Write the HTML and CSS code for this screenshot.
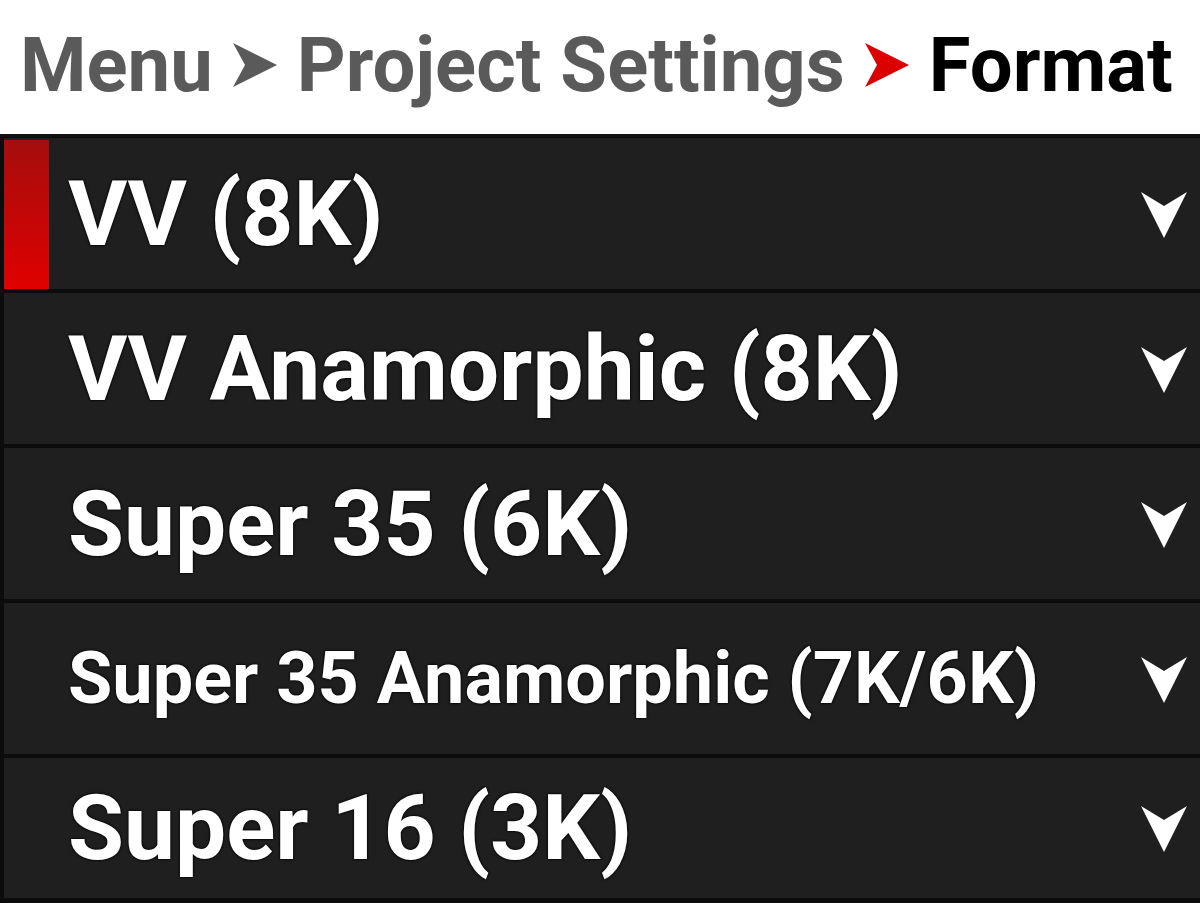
FILE: index.html
```html
<!DOCTYPE html>
<html>
<head>
<meta charset="utf-8">
<link rel="stylesheet" href="styles.css">
</head>
<body>
<div class="crumbs">
  <span class="crumb">Menu</span>
  <svg class="sep" viewBox="0 0 48 48"><path d="M2 2 L46 24 L2 46 L14 24 Z" fill="#5a5a5a"/></svg>
  <span class="crumb">Project Settings</span>
  <svg class="sep" viewBox="0 0 48 48"><path d="M2 2 L46 24 L2 46 L14 24 Z" fill="#dd0000"/></svg>
  <span class="crumb current">Format</span>
</div>
<div class="list">
  <div class="row active"><span class="mark"></span><span class="label">VV (8K)</span><svg class="chev" viewBox="0 0 48 48"><path d="M1 2 L24 16 L47 2 L24 48 Z" fill="#fff"/></svg></div>
  <div class="row"><span class="mark"></span><span class="label">VV Anamorphic (8K)</span><svg class="chev" viewBox="0 0 48 48"><path d="M1 2 L24 16 L47 2 L24 48 Z" fill="#fff"/></svg></div>
  <div class="row"><span class="mark"></span><span class="label">Super 35 (6K)</span><svg class="chev" viewBox="0 0 48 48"><path d="M1 2 L24 16 L47 2 L24 48 Z" fill="#fff"/></svg></div>
  <div class="row"><span class="mark"></span><span class="label small">Super 35 Anamorphic (7K/6K)</span><svg class="chev" viewBox="0 0 48 48"><path d="M1 2 L24 16 L47 2 L24 48 Z" fill="#fff"/></svg></div>
  <div class="row last"><span class="mark"></span><span class="label">Super 16 (3K)</span><svg class="chev" viewBox="0 0 48 48"><path d="M1 2 L24 16 L47 2 L24 48 Z" fill="#fff"/></svg></div>
</div>
</body>
</html>
```
FILE: styles.css
```css
html, body {
  margin: 0;
  padding: 0;
  background: #fff;
  font-family: Roboto, "Liberation Sans", sans-serif;
  overflow: hidden;
}
.crumbs {
  height: 134px;
  display: flex;
  align-items: center;
  padding-left: 20px;
  gap: 18px;
  font-weight: 700;
  font-size: 76px;
  color: #5a5a5a;
  white-space: nowrap;
  box-sizing: border-box;
  padding-bottom: 4px;
}
.crumb.current { color: #000; }
.sep { width: 48px; height: 48px; flex: none; }
.list {
  background: #0c0c0c;
  border-top: 3px solid #111;
  padding: 1px 0 6px 4px;
  display: flex;
  flex-direction: column;
  gap: 4px;
}
.row {
  height: 151px;
  background: #1f1f1f;
  display: flex;
  align-items: center;
  color: #fff;
}
.row.last { height: 140px; }
.mark {
  width: 45px;
  align-self: stretch;
  margin: 2px 0 0 0;
  flex: none;
}
.row.active .mark {
  background: linear-gradient(#a50d0d, #e00000);
}
.label {
  margin-left: 19px;
  flex: 1;
  font-weight: 700;
  font-size: 91px;
  white-space: nowrap;
  text-shadow: 0 0 3px #000, 0 0 2px #000;
}
.label.small { font-size: 72px; }
.chev {
  width: 48px;
  height: 48px;
  margin-right: 12px;
  flex: none;
}
```
